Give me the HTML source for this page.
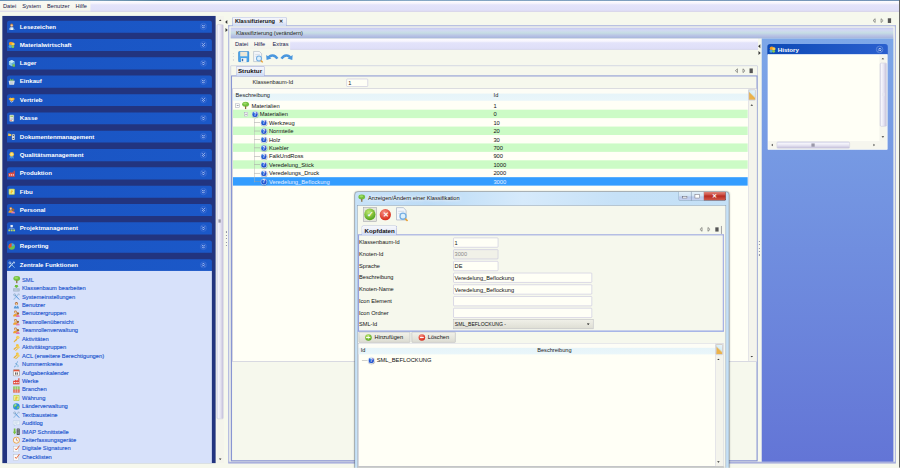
<!DOCTYPE html>
<html><head><meta charset="utf-8"><title>Klassifizierung</title>
<style>
html,body{margin:0;padding:0;width:900px;height:468px;overflow:hidden;background:#f6f8ed}
#s{position:absolute;left:0;top:0;width:1920px;height:998.4px;transform:scale(0.46875);transform-origin:0 0;background:#f6f8ed;overflow:hidden;font-family:"Liberation Sans",sans-serif;font-size:11.5px}
#s div,#s svg{position:absolute}
.t,.ta{white-space:nowrap;line-height:16px;height:16px}
.t{font-size:12px}
.ta{font-size:12.3px}
</style></head><body><div id="s">
<div style="left:0px;top:0px;width:1920px;height:24.75px;background:linear-gradient(#fafaf4,#f3f3ea)"></div>
<div style="left:192.64px;top:1.71px;width:1725.23px;height:23.04px;background:linear-gradient(#fefdff,#f6f4fd 22%,#e4e4fa 36%,#e0e0f9 88%,#d2cfea)"></div>
<div style="left:0px;top:0px;width:1920px;height:1.81px;background:linear-gradient(90deg,#5a88b0,#86a8c4 8%,#477796 18%,#7fa3c2 45%,#6a8cb2)"></div>
<div style="left:0px;top:23.47px;width:1920px;height:1.28px;background:#d9d6ea"></div>
<div class="t" style="left:6.4px;top:5.44px;color:#15154a">Datei</div>
<div class="t" style="left:47.57px;top:5.44px;color:#15154a">System</div>
<div class="t" style="left:100.27px;top:5.44px;color:#15154a">Benutzer</div>
<div class="t" style="left:161.28px;top:5.44px;color:#15154a">Hilfe</div>
<div style="left:1918.29px;top:0px;width:1.71px;height:998.4px;background:#5a5a5a"></div>
<div style="left:4.91px;top:34.13px;width:455.47px;height:953.6px;background:#22347f"></div>
<div style="left:14.93px;top:44.16px;width:436.69px;height:25.6px;background:linear-gradient(90deg,#1a54c2,#1b58c8);border-radius:4.5px 4.5px 0 0"></div>
<svg class="a" style="left:17.49px;top:48.75px" width="16.0" height="16.0" viewBox="0 0 16 16"><circle cx="8" cy="4.6" r="3.3" fill="#b8763a"/><circle cx="8" cy="5.4" r="2.3" fill="#f4cfa4"/><path d="M2.5 15 C2.5 10 5 9 8 9 C11 9 13.5 10 13.5 15 Z" fill="#e4eef9"/><path d="M2.5 15 C2.5 12.5 3.5 11 5 10.4 L5 15 Z M13.5 15 C13.5 12.5 12.5 11 11 10.4 L11 15 Z" fill="#5b9bd8"/></svg>
<div class="t" style="left:42.24px;top:48.96px;color:#fff;font-weight:bold;font-size:13px">Lesezeichen</div>
<div style="left:426.67px;top:49.28px;width:14.51px;height:14.51px;border-radius:50%;border:1px solid #4c7cda;box-sizing:border-box;background:#2159ca"></div>
<svg class="a" style="left:0;top:0" width="1920" height="999"><path d="M430.9 53.0 l3 3 l3 -3 M430.9 57.0 l3 3 l3 -3" stroke="#e4ecff" stroke-width="1.4" fill="none"/></svg>
<div style="left:14.93px;top:83.27px;width:436.69px;height:25.6px;background:linear-gradient(90deg,#1a54c2,#1b58c8);border-radius:4.5px 4.5px 0 0"></div>
<svg class="a" style="left:17.49px;top:87.86px" width="16.0" height="16.0" viewBox="0 0 16 16"><circle cx="6.5" cy="5.5" r="4.5" fill="#f59a23"/><circle cx="11" cy="6" r="3.4" fill="#f8cf4c"/><circle cx="5" cy="11" r="3.6" fill="#4aa6e0"/><circle cx="10.5" cy="11.5" r="3" fill="#86c84c"/></svg>
<div class="t" style="left:42.24px;top:88.07px;color:#fff;font-weight:bold;font-size:13px">Materialwirtschaft</div>
<div style="left:426.67px;top:88.39px;width:14.51px;height:14.51px;border-radius:50%;border:1px solid #4c7cda;box-sizing:border-box;background:#2159ca"></div>
<svg class="a" style="left:0;top:0" width="1920" height="999"><path d="M430.9 92.1 l3 3 l3 -3 M430.9 96.1 l3 3 l3 -3" stroke="#e4ecff" stroke-width="1.4" fill="none"/></svg>
<div style="left:14.93px;top:122.38px;width:436.69px;height:25.6px;background:linear-gradient(90deg,#1a54c2,#1b58c8);border-radius:4.5px 4.5px 0 0"></div>
<svg class="a" style="left:17.49px;top:126.97px" width="16.0" height="16.0" viewBox="0 0 16 16"><path d="M8 1 L14 4 L14 11 L8 14.5 L2 11 L2 4 Z" fill="#8fcdea"/><path d="M8 7.5 L14 4 L14 11 L8 14.5 Z" fill="#5fb0dc"/><path d="M8 1 L14 4 L8 7.5 L2 4 Z" fill="#c4e7f6"/><rect x="9.5" y="10" width="5.5" height="5.5" rx="1" fill="#7cc04a"/></svg>
<div class="t" style="left:42.24px;top:127.18px;color:#fff;font-weight:bold;font-size:13px">Lager</div>
<div style="left:426.67px;top:127.5px;width:14.51px;height:14.51px;border-radius:50%;border:1px solid #4c7cda;box-sizing:border-box;background:#2159ca"></div>
<svg class="a" style="left:0;top:0" width="1920" height="999"><path d="M430.9 131.3 l3 3 l3 -3 M430.9 135.3 l3 3 l3 -3" stroke="#e4ecff" stroke-width="1.4" fill="none"/></svg>
<div style="left:14.93px;top:161.49px;width:436.69px;height:25.6px;background:linear-gradient(90deg,#1a54c2,#1b58c8);border-radius:4.5px 4.5px 0 0"></div>
<svg class="a" style="left:17.49px;top:166.08px" width="16.0" height="16.0" viewBox="0 0 16 16"><path d="M5 1.5 L8 5 L11 1.5 L12 6 L4 6 Z" fill="#78c043"/><path d="M1.5 6.5 L14.5 6.5 L13 15 L3 15 Z" fill="#dfe7ec"/><path d="M4 8.5 L12 8.5 M4.4 11 L11.6 11 M4.8 13.2 L11.2 13.2" stroke="#9fb0bb" stroke-width="1"/></svg>
<div class="t" style="left:42.24px;top:166.29px;color:#fff;font-weight:bold;font-size:13px">Einkauf</div>
<div style="left:426.67px;top:166.61px;width:14.51px;height:14.51px;border-radius:50%;border:1px solid #4c7cda;box-sizing:border-box;background:#2159ca"></div>
<svg class="a" style="left:0;top:0" width="1920" height="999"><path d="M430.9 170.4 l3 3 l3 -3 M430.9 174.4 l3 3 l3 -3" stroke="#e4ecff" stroke-width="1.4" fill="none"/></svg>
<div style="left:14.93px;top:200.6px;width:436.69px;height:25.6px;background:linear-gradient(90deg,#1a54c2,#1b58c8);border-radius:4.5px 4.5px 0 0"></div>
<svg class="a" style="left:17.49px;top:205.19px" width="16.0" height="16.0" viewBox="0 0 16 16"><path d="M1 6 L5 3.2 L8 4.6 L11 3.2 L15 6 L8 11.5 Z" fill="#f6a623"/><path d="M3 6 L8 4.6 L13 6 L8 9 Z" fill="#fbd65a"/><path d="M4 10 L8 13 L12 10" stroke="#fff" stroke-width="1.4" fill="none"/></svg>
<div class="t" style="left:42.24px;top:205.40px;color:#fff;font-weight:bold;font-size:13px">Vertrieb</div>
<div style="left:426.67px;top:205.72px;width:14.51px;height:14.51px;border-radius:50%;border:1px solid #4c7cda;box-sizing:border-box;background:#2159ca"></div>
<svg class="a" style="left:0;top:0" width="1920" height="999"><path d="M430.9 209.5 l3 3 l3 -3 M430.9 213.5 l3 3 l3 -3" stroke="#e4ecff" stroke-width="1.4" fill="none"/></svg>
<div style="left:14.93px;top:239.71px;width:436.69px;height:25.6px;background:linear-gradient(90deg,#1a54c2,#1b58c8);border-radius:4.5px 4.5px 0 0"></div>
<svg class="a" style="left:17.49px;top:244.30px" width="16.0" height="16.0" viewBox="0 0 16 16"><rect x="3.5" y="1" width="9" height="14.2" rx="1.5" fill="#eef1f2" stroke="#8d979c" stroke-width="1"/><rect x="5" y="2.6" width="6" height="3.2" fill="#9ccc65"/><rect x="5" y="7.4" width="6" height="1.6" fill="#b0bac0"/><rect x="5" y="10" width="6" height="1.6" fill="#b0bac0"/><rect x="5" y="12.4" width="3" height="1.6" fill="#e5533d"/></svg>
<div class="t" style="left:42.24px;top:244.51px;color:#fff;font-weight:bold;font-size:13px">Kasse</div>
<div style="left:426.67px;top:244.83px;width:14.51px;height:14.51px;border-radius:50%;border:1px solid #4c7cda;box-sizing:border-box;background:#2159ca"></div>
<svg class="a" style="left:0;top:0" width="1920" height="999"><path d="M430.9 248.6 l3 3 l3 -3 M430.9 252.6 l3 3 l3 -3" stroke="#e4ecff" stroke-width="1.4" fill="none"/></svg>
<div style="left:14.93px;top:278.82px;width:436.69px;height:25.6px;background:linear-gradient(90deg,#1a54c2,#1b58c8);border-radius:4.5px 4.5px 0 0"></div>
<svg class="a" style="left:17.49px;top:283.41px" width="16.0" height="16.0" viewBox="0 0 16 16"><path d="M0.5 2 L3 2 L4 3 L7 3 L7 7 L0.5 7 Z" fill="#f7c948"/><rect x="8.5" y="3.5" width="6" height="12" rx="1" fill="#f4f6f7" stroke="#7b868c" stroke-width=".8"/><rect x="10" y="5.4" width="3" height="2.2" fill="#3d4a52"/><rect x="10" y="11" width="3" height="2.2" fill="#3d4a52"/></svg>
<div class="t" style="left:42.24px;top:283.62px;color:#fff;font-weight:bold;font-size:13px">Dokumentenmanagement</div>
<div style="left:426.67px;top:283.94px;width:14.51px;height:14.51px;border-radius:50%;border:1px solid #4c7cda;box-sizing:border-box;background:#2159ca"></div>
<svg class="a" style="left:0;top:0" width="1920" height="999"><path d="M430.9 287.7 l3 3 l3 -3 M430.9 291.7 l3 3 l3 -3" stroke="#e4ecff" stroke-width="1.4" fill="none"/></svg>
<div style="left:14.93px;top:317.93px;width:436.69px;height:25.6px;background:linear-gradient(90deg,#1a54c2,#1b58c8);border-radius:4.5px 4.5px 0 0"></div>
<svg class="a" style="left:17.49px;top:322.52px" width="16.0" height="16.0" viewBox="0 0 16 16"><path d="M4.5 9 L3 15.5 L6 14 L8 15.5 L10 14 L13 15.5 L11.5 9 Z" fill="#4a90d9"/><circle cx="8" cy="6" r="4.8" fill="#f8cb3c"/><circle cx="8" cy="6" r="2.6" fill="#fbe38a"/></svg>
<div class="t" style="left:42.24px;top:322.73px;color:#fff;font-weight:bold;font-size:13px">Qualitätsmanagement</div>
<div style="left:426.67px;top:323.05px;width:14.51px;height:14.51px;border-radius:50%;border:1px solid #4c7cda;box-sizing:border-box;background:#2159ca"></div>
<svg class="a" style="left:0;top:0" width="1920" height="999"><path d="M430.9 326.8 l3 3 l3 -3 M430.9 330.8 l3 3 l3 -3" stroke="#e4ecff" stroke-width="1.4" fill="none"/></svg>
<div style="left:14.93px;top:357.04px;width:436.69px;height:25.6px;background:linear-gradient(90deg,#1a54c2,#1b58c8);border-radius:4.5px 4.5px 0 0"></div>
<svg class="a" style="left:17.49px;top:361.63px" width="16.0" height="16.0" viewBox="0 0 16 16"><path d="M1 15 L1 7 L5 7 L5 5 L9 7 L9 5 L12 7 L12 2 L14.5 2 L14.5 15 Z" fill="#e2493a"/><rect x="2.5" y="10" width="2.4" height="2.4" fill="#fff"/><rect x="6.4" y="10" width="2.4" height="2.4" fill="#fff"/><rect x="10.3" y="10" width="2.4" height="2.4" fill="#fff"/></svg>
<div class="t" style="left:42.24px;top:361.84px;color:#fff;font-weight:bold;font-size:13px">Produktion</div>
<div style="left:426.67px;top:362.16px;width:14.51px;height:14.51px;border-radius:50%;border:1px solid #4c7cda;box-sizing:border-box;background:#2159ca"></div>
<svg class="a" style="left:0;top:0" width="1920" height="999"><path d="M430.9 365.9 l3 3 l3 -3 M430.9 369.9 l3 3 l3 -3" stroke="#e4ecff" stroke-width="1.4" fill="none"/></svg>
<div style="left:14.93px;top:396.15px;width:436.69px;height:25.6px;background:linear-gradient(90deg,#1a54c2,#1b58c8);border-radius:4.5px 4.5px 0 0"></div>
<svg class="a" style="left:17.49px;top:400.74px" width="16.0" height="16.0" viewBox="0 0 16 16"><rect x="1.5" y="1.5" width="13" height="13" rx="2" fill="#bcd25a"/><rect x="3" y="3" width="10" height="10" rx="1.5" fill="#e9ef9a"/><path d="M5 12 L6.5 5 L9.5 5 L11 8 L8.5 9 L9 12 Z" fill="#f3c130"/></svg>
<div class="t" style="left:42.24px;top:400.95px;color:#fff;font-weight:bold;font-size:13px">Fibu</div>
<div style="left:426.67px;top:401.27px;width:14.51px;height:14.51px;border-radius:50%;border:1px solid #4c7cda;box-sizing:border-box;background:#2159ca"></div>
<svg class="a" style="left:0;top:0" width="1920" height="999"><path d="M430.9 405.0 l3 3 l3 -3 M430.9 409.0 l3 3 l3 -3" stroke="#e4ecff" stroke-width="1.4" fill="none"/></svg>
<div style="left:14.93px;top:435.26px;width:436.69px;height:25.6px;background:linear-gradient(90deg,#1a54c2,#1b58c8);border-radius:4.5px 4.5px 0 0"></div>
<svg class="a" style="left:17.49px;top:439.85px" width="16.0" height="16.0" viewBox="0 0 16 16"><circle cx="6" cy="4.6" r="3" fill="#b8763a"/><circle cx="6" cy="5.2" r="2" fill="#f4cfa4"/><path d="M1 14 C1 9.5 3.5 8.6 6 8.6 C8.5 8.6 11 9.5 11 14 Z" fill="#f0a030"/><circle cx="11" cy="7.6" r="2.6" fill="#a8642a"/><path d="M7 15.5 C7 11.6 9 11 11 11 C13 11 15 11.6 15 15.5 Z" fill="#e07ab0"/></svg>
<div class="t" style="left:42.24px;top:440.06px;color:#fff;font-weight:bold;font-size:13px">Personal</div>
<div style="left:426.67px;top:440.38px;width:14.51px;height:14.51px;border-radius:50%;border:1px solid #4c7cda;box-sizing:border-box;background:#2159ca"></div>
<svg class="a" style="left:0;top:0" width="1920" height="999"><path d="M430.9 444.1 l3 3 l3 -3 M430.9 448.1 l3 3 l3 -3" stroke="#e4ecff" stroke-width="1.4" fill="none"/></svg>
<div style="left:14.93px;top:474.37px;width:436.69px;height:25.6px;background:linear-gradient(90deg,#1a54c2,#1b58c8);border-radius:4.5px 4.5px 0 0"></div>
<svg class="a" style="left:17.49px;top:478.96px" width="16.0" height="16.0" viewBox="0 0 16 16"><rect x="5.5" y="1" width="5" height="4.4" fill="#f4f6fb" stroke="#9fb2d8" stroke-width=".6"/><path d="M8 5.4 L8 8.4 M2.8 10.6 L2.8 8.4 L13.2 8.4 L13.2 10.6 M8 8.4 L8 10.6" stroke="#9fc0f0" stroke-width="1" fill="none"/><rect x="0.8" y="10.6" width="4" height="3.8" fill="#b8d868"/><rect x="6" y="10.6" width="4" height="3.8" fill="#b8d868"/><rect x="11.2" y="10.6" width="4" height="3.8" fill="#b8d868"/></svg>
<div class="t" style="left:42.24px;top:479.17px;color:#fff;font-weight:bold;font-size:13px">Projektmanagement</div>
<div style="left:426.67px;top:479.49px;width:14.51px;height:14.51px;border-radius:50%;border:1px solid #4c7cda;box-sizing:border-box;background:#2159ca"></div>
<svg class="a" style="left:0;top:0" width="1920" height="999"><path d="M430.9 483.2 l3 3 l3 -3 M430.9 487.2 l3 3 l3 -3" stroke="#e4ecff" stroke-width="1.4" fill="none"/></svg>
<div style="left:14.93px;top:513.48px;width:436.69px;height:25.6px;background:linear-gradient(90deg,#1a54c2,#1b58c8);border-radius:4.5px 4.5px 0 0"></div>
<svg class="a" style="left:17.49px;top:518.07px" width="16.0" height="16.0" viewBox="0 0 16 16"><circle cx="8" cy="8" r="6.8" fill="#6cc24a"/><path d="M8 8 L8 1.2 A6.8 6.8 0 0 0 2.2 11.6 Z" fill="#e8483a"/><path d="M8 8 L8 1.2 A6.8 6.8 0 0 1 14.4 5.6 Z" fill="#4aa6e0"/></svg>
<div class="t" style="left:42.24px;top:518.28px;color:#fff;font-weight:bold;font-size:13px">Reporting</div>
<div style="left:426.67px;top:518.6px;width:14.51px;height:14.51px;border-radius:50%;border:1px solid #4c7cda;box-sizing:border-box;background:#2159ca"></div>
<svg class="a" style="left:0;top:0" width="1920" height="999"><path d="M430.9 522.4 l3 3 l3 -3 M430.9 526.4 l3 3 l3 -3" stroke="#e4ecff" stroke-width="1.4" fill="none"/></svg>
<div style="left:14.93px;top:552.6px;width:436.69px;height:25.6px;background:linear-gradient(90deg,#1a54c2,#1b58c8);border-radius:4.5px 4.5px 0 0"></div>
<svg class="a" style="left:17.49px;top:557.18px" width="16.0" height="16.0" viewBox="0 0 16 16"><path d="M2.5 13.5 L11.5 3.5" stroke="#cfe4f6" stroke-width="2.2" stroke-linecap="round"/><path d="M13.5 13.5 L5 4.5" stroke="#8fc0ea" stroke-width="2" stroke-linecap="round"/><circle cx="4.2" cy="3.8" r="2.2" fill="none" stroke="#cfe4f6" stroke-width="1.4"/><path d="M11 2 L14 2 L14 5" stroke="#e8f2fb" stroke-width="1.4" fill="none"/></svg>
<div class="t" style="left:42.24px;top:557.40px;color:#fff;font-weight:bold;font-size:13px">Zentrale Funktionen</div>
<div style="left:426.67px;top:557.72px;width:14.51px;height:14.51px;border-radius:50%;border:1px solid #4c7cda;box-sizing:border-box;background:#2159ca"></div>
<svg class="a" style="left:0;top:0" width="1920" height="999"><path d="M430.9 564.5 l3 -3 l3 3 M430.9 568.5 l3 -3 l3 3" stroke="#e4ecff" stroke-width="1.4" fill="none"/></svg>
<div style="left:14.93px;top:577.92px;width:436.69px;height:409.81px;background:#d7e1fa"></div>
<svg class="a" style="left:26.67px;top:587.89px" width="17.6" height="17.6" viewBox="0 0 16 16"><ellipse cx="8" cy="5.6" rx="6.6" ry="4.8" fill="#72bf3f"/><ellipse cx="7" cy="4.4" rx="3.6" ry="2.2" fill="#9edb63"/><rect x="6.8" y="9.4" width="2.4" height="5.6" fill="#8d6a3a"/></svg>
<div class="t" style="left:46.93px;top:588.69px;color:#2457cf;font-size:12.3px;-webkit-text-stroke:0.3px #2457cf">SML</div>
<svg class="a" style="left:27.31px;top:606.69px" width="16.0" height="16.0" viewBox="0 0 16 16"><path d="M5 1 L11 1 L11 3.4 L13 3.4 L8 7.4 L3 3.4 L5 3.4 Z" fill="#6fbf3f"/><rect x="1" y="8" width="14" height="7" rx="1" fill="#9fb4c8"/><path d="M2.5 10 L13.5 10 M2.5 12.4 L13.5 12.4" stroke="#e8eff5" stroke-width="1.2" stroke-dasharray="1.6 1"/></svg>
<div class="t" style="left:46.93px;top:606.69px;color:#2457cf;font-size:12.3px;-webkit-text-stroke:0.3px #2457cf">Klassenbaum bearbeiten</div>
<svg class="a" style="left:27.31px;top:624.69px" width="16.0" height="16.0" viewBox="0 0 16 16"><path d="M2.5 13.5 L11.5 3.5" stroke="#9cc0e4" stroke-width="2.2" stroke-linecap="round"/><path d="M13.5 13.5 L5 4.5" stroke="#4a90d9" stroke-width="2" stroke-linecap="round"/><circle cx="4.2" cy="3.8" r="2.2" fill="none" stroke="#8aa8c4" stroke-width="1.4"/><path d="M11 2 L14 2 L14 5" stroke="#9ab0c6" stroke-width="1.4" fill="none"/></svg>
<div class="t" style="left:46.93px;top:624.69px;color:#2457cf;font-size:12.3px;-webkit-text-stroke:0.3px #2457cf">Systemeinstellungen</div>
<svg class="a" style="left:27.31px;top:642.69px" width="16.0" height="16.0" viewBox="0 0 16 16"><circle cx="8" cy="4.6" r="3.3" fill="#a8642a"/><circle cx="8" cy="5.6" r="2.2" fill="#f4cfa4"/><path d="M2.5 15 C2.5 10 5 9 8 9 C11 9 13.5 10 13.5 15 Z" fill="#5b9bd8"/><path d="M6.5 9 L8 12 L9.5 9 Z" fill="#f5f8fc"/></svg>
<div class="t" style="left:46.93px;top:642.69px;color:#2457cf;font-size:12.3px;-webkit-text-stroke:0.3px #2457cf">Benutzer</div>
<svg class="a" style="left:27.31px;top:660.69px" width="16.0" height="16.0" viewBox="0 0 16 16"><circle cx="6" cy="4.6" r="3" fill="#b8763a"/><circle cx="6" cy="5.2" r="2" fill="#f4cfa4"/><path d="M1 14 C1 9.5 3.5 8.6 6 8.6 C8.5 8.6 11 9.5 11 14 Z" fill="#f0a030"/><circle cx="11" cy="7.6" r="2.6" fill="#a8642a"/><path d="M7 15.5 C7 11.6 9 11 11 11 C13 11 15 11.6 15 15.5 Z" fill="#e07ab0"/></svg>
<div class="t" style="left:46.93px;top:660.69px;color:#2457cf;font-size:12.3px;-webkit-text-stroke:0.3px #2457cf">Benutzergruppen</div>
<svg class="a" style="left:27.31px;top:678.69px" width="16.0" height="16.0" viewBox="0 0 16 16"><circle cx="6" cy="4.6" r="3" fill="#b8763a"/><circle cx="6" cy="5.2" r="2" fill="#f4cfa4"/><path d="M1 14 C1 9.5 3.5 8.6 6 8.6 C8.5 8.6 11 9.5 11 14 Z" fill="#f0a030"/><circle cx="11" cy="7.6" r="2.6" fill="#a8642a"/><path d="M7 15.5 C7 11.6 9 11 11 11 C13 11 15 11.6 15 15.5 Z" fill="#e07ab0"/></svg>
<div class="t" style="left:46.93px;top:678.69px;color:#2457cf;font-size:12.3px;-webkit-text-stroke:0.3px #2457cf">Teamrollenübersicht</div>
<svg class="a" style="left:27.31px;top:696.69px" width="16.0" height="16.0" viewBox="0 0 16 16"><circle cx="6" cy="4.6" r="3" fill="#b8763a"/><circle cx="6" cy="5.2" r="2" fill="#f4cfa4"/><path d="M1 14 C1 9.5 3.5 8.6 6 8.6 C8.5 8.6 11 9.5 11 14 Z" fill="#f0a030"/><circle cx="11" cy="7.6" r="2.6" fill="#a8642a"/><path d="M7 15.5 C7 11.6 9 11 11 11 C13 11 15 11.6 15 15.5 Z" fill="#e07ab0"/></svg>
<div class="t" style="left:46.93px;top:696.69px;color:#2457cf;font-size:12.3px;-webkit-text-stroke:0.3px #2457cf">Teamrollenverwaltung</div>
<svg class="a" style="left:27.31px;top:714.69px" width="16.0" height="16.0" viewBox="0 0 16 16"><circle cx="11" cy="4.6" r="3.4" fill="#f2c644"/><circle cx="11.6" cy="4" r="1.1" fill="#fff6d0"/><path d="M8.8 6.8 L2.4 13.2 L2.4 15 L4.6 15 L4.6 13.6 L6 13.6 L6 12.2 L7.4 12.2 L10 9" fill="#e8b030"/></svg>
<div class="t" style="left:46.93px;top:714.69px;color:#2457cf;font-size:12.3px;-webkit-text-stroke:0.3px #2457cf">Aktivitäten</div>
<svg class="a" style="left:27.31px;top:732.69px" width="16.0" height="16.0" viewBox="0 0 16 16"><circle cx="10" cy="4" r="3" fill="#f2c644"/><path d="M8 6 L2 11 L2 13 L4 13 L9.6 7.6" fill="#e8b030"/><circle cx="12" cy="8" r="3" fill="#f5d060"/><path d="M10 10 L4.6 15 L7 15.4 L12 11" fill="#eebb40"/></svg>
<div class="t" style="left:46.93px;top:732.69px;color:#2457cf;font-size:12.3px;-webkit-text-stroke:0.3px #2457cf">Aktivitätsgruppen</div>
<svg class="a" style="left:27.31px;top:750.69px" width="16.0" height="16.0" viewBox="0 0 16 16"><circle cx="10" cy="4" r="3" fill="#f2c644"/><path d="M8 6 L2 11 L2 13 L4 13 L9.6 7.6" fill="#e8b030"/><circle cx="12" cy="8" r="3" fill="#f5d060"/><path d="M10 10 L4.6 15 L7 15.4 L12 11" fill="#eebb40"/></svg>
<div class="t" style="left:46.93px;top:750.69px;color:#2457cf;font-size:12.3px;-webkit-text-stroke:0.3px #2457cf">ACL (erweitere Berechtigungen)</div>
<svg class="a" style="left:27.31px;top:768.69px" width="16.0" height="16.0" viewBox="0 0 16 16"><path d="M9 1 L12 3 L8 6 L11 8 L5 12 L7 13.6 L3 15 L4 11.6 L8 9 L5 7 L9.6 3.6 Z" fill="#6aa4d6"/><circle cx="11" cy="11.6" r="2.6" fill="#a8cbe8"/></svg>
<div class="t" style="left:46.93px;top:768.69px;color:#2457cf;font-size:12.3px;-webkit-text-stroke:0.3px #2457cf">Nummernkreise</div>
<svg class="a" style="left:27.31px;top:786.69px" width="16.0" height="16.0" viewBox="0 0 16 16"><rect x="1.5" y="1.5" width="13" height="13.4" rx="1.4" fill="#fdfdfd" stroke="#6d5a50" stroke-width="1"/><rect x="2" y="2" width="12" height="3.2" fill="#e2563c"/><rect x="5.4" y="7.4" width="2" height="5" fill="#444"/><rect x="8.8" y="7.4" width="2" height="5" fill="#444"/></svg>
<div class="t" style="left:46.93px;top:786.69px;color:#2457cf;font-size:12.3px;-webkit-text-stroke:0.3px #2457cf">Aufgabenkalender</div>
<svg class="a" style="left:27.31px;top:804.69px" width="16.0" height="16.0" viewBox="0 0 16 16"><path d="M1 15 L1 7 L5 7 L5 5 L9 7 L9 5 L12 7 L12 2 L14.5 2 L14.5 15 Z" fill="#e2493a"/><rect x="2.5" y="10" width="2.4" height="2.4" fill="#fff"/><rect x="6.4" y="10" width="2.4" height="2.4" fill="#fff"/><rect x="10.3" y="10" width="2.4" height="2.4" fill="#fff"/></svg>
<div class="t" style="left:46.93px;top:804.69px;color:#2457cf;font-size:12.3px;-webkit-text-stroke:0.3px #2457cf">Werke</div>
<svg class="a" style="left:27.31px;top:822.69px" width="16.0" height="16.0" viewBox="0 0 16 16"><rect x="1" y="1.5" width="14" height="6.5" fill="#7cc04a"/><rect x="1" y="8" width="14" height="6.5" fill="#e2573c"/><path d="M5.6 1.5 L5.6 14.5 M10.4 1.5 L10.4 14.5 M1 4.8 L15 4.8 M1 11.2 L15 11.2" stroke="#f1f4e6" stroke-width=".9"/></svg>
<div class="t" style="left:46.93px;top:822.69px;color:#2457cf;font-size:12.3px;-webkit-text-stroke:0.3px #2457cf">Branchen</div>
<svg class="a" style="left:27.31px;top:840.69px" width="16.0" height="16.0" viewBox="0 0 16 16"><rect x="1.5" y="1.5" width="13" height="13" rx="2" fill="#bcd25a"/><rect x="3" y="3" width="10" height="10" rx="1.5" fill="#e9ef9a"/><path d="M5 12 L6.5 5 L9.5 5 L11 8 L8.5 9 L9 12 Z" fill="#f3c130"/></svg>
<div class="t" style="left:46.93px;top:840.69px;color:#2457cf;font-size:12.3px;-webkit-text-stroke:0.3px #2457cf">Währung</div>
<svg class="a" style="left:27.31px;top:858.69px" width="16.0" height="16.0" viewBox="0 0 16 16"><circle cx="8" cy="8" r="7" fill="#2f8fd8"/><path d="M4 3.6 C6 2 9 3 8.4 5.4 C8 7 5.4 7 5 9 C4.6 11 3 10 2.2 8.4 C1.8 6.4 2.6 4.6 4 3.6 Z" fill="#7ccf52"/><path d="M10.5 8 C12.6 7.6 14 9 13.2 11 C12.4 12.8 10.4 13.6 9.8 12 C9.4 10.6 9.4 8.4 10.5 8 Z" fill="#7ccf52"/><circle cx="6" cy="5" r="2.2" fill="#bfe8ff" opacity=".45"/></svg>
<div class="t" style="left:46.93px;top:858.69px;color:#2457cf;font-size:12.3px;-webkit-text-stroke:0.3px #2457cf">Länderverwaltung</div>
<svg class="a" style="left:27.31px;top:876.69px" width="16.0" height="16.0" viewBox="0 0 16 16"><path d="M2.5 13.5 L11.5 3.5" stroke="#9cc0e4" stroke-width="2.2" stroke-linecap="round"/><path d="M13.5 13.5 L5 4.5" stroke="#4a90d9" stroke-width="2" stroke-linecap="round"/><circle cx="4.2" cy="3.8" r="2.2" fill="none" stroke="#8aa8c4" stroke-width="1.4"/><path d="M11 2 L14 2 L14 5" stroke="#9ab0c6" stroke-width="1.4" fill="none"/></svg>
<div class="t" style="left:46.93px;top:876.69px;color:#2457cf;font-size:12.3px;-webkit-text-stroke:0.3px #2457cf">Textbausteine</div>
<svg class="a" style="left:27.31px;top:894.69px" width="16.0" height="16.0" viewBox="0 0 16 16"><path d="M2 2.5 L14 2.5 Q15 2.5 15 3.5 L15 10 Q15 11 14 11 L7 11 L4 14 L4 11 L2 11 Q1 11 1 10 L1 3.5 Q1 2.5 2 2.5 Z" fill="#eef5fb" stroke="#a9c3dc" stroke-width=".9"/><path d="M3.6 5.4 L12.4 5.4 M3.6 8 L10 8" stroke="#a9c3dc" stroke-width="1"/></svg>
<div class="t" style="left:46.93px;top:894.69px;color:#2457cf;font-size:12.3px;-webkit-text-stroke:0.3px #2457cf">Auditlog</div>
<svg class="a" style="left:27.31px;top:912.69px" width="16.0" height="16.0" viewBox="0 0 16 16"><path d="M2.4 1 L6 1 L6 8 L8 8 L4.2 14 L0.4 8 L2.4 8 Z" fill="#77c23f"/><rect x="8.6" y="1" width="6.6" height="14" rx="1" fill="#4a4f55"/><path d="M10 3.6 L14 3.6 M10 6.4 L14 6.4 M10 9.2 L14 9.2 M10 12 L14 12" stroke="#cfd6dc" stroke-width="1.1"/></svg>
<div class="t" style="left:46.93px;top:912.69px;color:#2457cf;font-size:12.3px;-webkit-text-stroke:0.3px #2457cf">IMAP Schnittstelle</div>
<svg class="a" style="left:27.31px;top:930.69px" width="16.0" height="16.0" viewBox="0 0 16 16"><circle cx="8" cy="8" r="6.6" fill="#fbf6ea" stroke="#e89a3a" stroke-width="1.8"/><path d="M8 4 L8 8 L11 9.6" stroke="#7a4a9a" stroke-width="1.3" fill="none"/></svg>
<div class="t" style="left:46.93px;top:930.69px;color:#2457cf;font-size:12.3px;-webkit-text-stroke:0.3px #2457cf">Zeiterfassungsgeräte</div>
<svg class="a" style="left:27.31px;top:948.69px" width="16.0" height="16.0" viewBox="0 0 16 16"><rect x="2" y="3" width="10.6" height="12" fill="#fafafa" stroke="#b8bcc2" stroke-width=".9"/><path d="M5 8 L7.6 11 L14.6 1.6" stroke="#e8693a" stroke-width="2" fill="none"/></svg>
<div class="t" style="left:46.93px;top:948.69px;color:#2457cf;font-size:12.3px;-webkit-text-stroke:0.3px #2457cf">Digitale Signaturen</div>
<svg class="a" style="left:27.31px;top:966.69px" width="16.0" height="16.0" viewBox="0 0 16 16"><rect x="2" y="3" width="10.6" height="12" fill="#fafafa" stroke="#b8bcc2" stroke-width=".9"/><path d="M5 8 L7.6 11 L14.6 1.6" stroke="#e8693a" stroke-width="2" fill="none"/></svg>
<div class="t" style="left:46.93px;top:966.69px;color:#2457cf;font-size:12.3px;-webkit-text-stroke:0.3px #2457cf">Checklisten</div>
<div style="left:462.08px;top:34.13px;width:15.79px;height:953.6px;background:#f4f4ec"></div>
<div style="left:462.29px;top:51.63px;width:14.72px;height:842.24px;background:linear-gradient(90deg,#d4d4ea,#f6f6fc 18%,#e6e4f2 55%,#c4c0da);border-radius:3px;border:1px solid #c4c4dc;box-sizing:border-box"></div>
<div style="left:466.35px;top:468.05px;width:5.12px;height:6.83px;background:repeating-linear-gradient(#9a98a8 0 1px,#e8e8f0 1px 2px)"></div>
<svg class="a" style="left:0;top:0" width="1920" height="999"><polygon points="467.0,44.8 472.5,44.8 469.8,41.8" fill="#333"/></svg>
<svg class="a" style="left:0;top:0" width="1920" height="999"><polygon points="467.0,978.3 472.5,978.3 469.8,981.4" fill="#333"/></svg>
<svg class="a" style="left:0;top:0" width="1920" height="999"><polygon points="484.9,42.7 484.9,51.2 480.2,46.9" fill="#333"/></svg>
<svg class="a" style="left:0;top:0" width="1920" height="999"><polygon points="481.1,59.7 481.1,68.3 485.8,64.0" fill="#333"/></svg>
<div style="left:482.13px;top:492.8px;width:2.13px;height:38.4px;background:repeating-linear-gradient(#8a8aa0 0 1px,transparent 1px 3px)"></div>
<div style="left:487.04px;top:54.19px;width:1424px;height:934.4px;border:2.2px solid #9ea8dc;border-bottom:4.4px solid #aab0dc;box-sizing:border-box;background:#f6f8ed"></div>
<div style="left:494.93px;top:35.63px;width:116.69px;height:20.69px;background:linear-gradient(#f6f7fb,#e9edf8 50%,#c9d8f5);border:1.5px solid #8f9ad6;border-bottom:none;box-sizing:border-box;border-radius:4px 4px 0 0"></div>
<div class="t" style="left:501.33px;top:37.44px;font-weight:bold;color:#111">Klassifizierung</div>
<div class="t" style="left:595.84px;top:37.44px;font-size:10px;color:#222;font-weight:bold">✕</div>
<svg class="a" style="left:0;top:0" width="1920" height="999"><polygon points="1867.0,39.9 1867.0,48.0 1862.5,43.9" fill="none" stroke="#333" stroke-width="1"/></svg>
<svg class="a" style="left:0;top:0" width="1920" height="999"><polygon points="1879.6,39.9 1879.6,48.0 1884.0,43.9" fill="none" stroke="#333" stroke-width="1"/></svg>
<div style="left:1894.4px;top:38.83px;width:6.83px;height:9.81px;background:#555;"></div>
<div style="left:491.95px;top:58.67px;width:1413.97px;height:23.68px;background:linear-gradient(#c4c8f1,#d2d8f3 22%,#c6dde4 48%,#b8c2e5 75%,#a4b4da)"></div>
<div class="t" style="left:503.47px;top:63.04px;color:#222">Klassifizierung (verändern)</div>
<div style="left:495.57px;top:84.91px;width:1121.49px;height:20.27px;background:linear-gradient(#fafaf4,#f3f3ea)"></div>
<div style="left:618.67px;top:82.77px;width:997.97px;height:22.83px;background:linear-gradient(#fdfbff,#f6f4fd 22%,#e3e3fa 36%,#dfdff8 88%,#ccccec)"></div>
<div class="t" style="left:501.33px;top:87.15px;color:#15154a">Datei</div>
<div class="t" style="left:541.87px;top:87.15px;color:#15154a">Hilfe</div>
<div class="t" style="left:581.55px;top:87.15px;color:#15154a">Extras</div>
<svg class="a" style="left:508.16px;top:108.96px" width="24.0" height="24.0" viewBox="0 0 16 16"><rect x="0.5" y="0.5" width="15" height="15" rx="1.6" fill="#49a4ea" stroke="#3a86cc" stroke-width="1"/><rect x="3" y="1" width="10" height="6.4" fill="#ece7d6"/><rect x="4" y="10" width="8" height="5.5" fill="#f4f4f4"/><rect x="5.2" y="11" width="2" height="3.4" fill="#3a6ea8"/></svg>
<svg class="a" style="left:536.75px;top:108.43px" width="25.9" height="25.9" viewBox="0 0 16 16"><path d="M2.5 1 L10 1 L13 4 L13 14.5 L2.5 14.5 Z" fill="#f4f7fb" stroke="#a9b4c4" stroke-width=".8"/><path d="M4.5 5 L11 5 M4.5 7.4 L9 7.4" stroke="#c8d2de" stroke-width=".8"/><circle cx="9.6" cy="10.4" r="3.3" fill="#dcf0fc" stroke="#74aee2" stroke-width="1.4"/><path d="M12 13 L14.6 15.6" stroke="#e8a23a" stroke-width="1.8"/></svg>
<svg class="a" style="left:567.47px;top:110.93px" width="59.73" height="21.33" viewBox="0 0 28 10"><path d="M2.6 6 C4.4 2.6 9 2.4 11.6 6.6" stroke="#4a97de" stroke-width="2.5" fill="none"/><polygon points="0.4,3 0.8,8 5.6,6.4" fill="#4a97de"/><path d="M24.7 6 C22.9 2.6 18.3 2.4 15.7 6.6" stroke="#4a97de" stroke-width="2.5" fill="none"/><polygon points="26.9,3 26.5,8 21.7,6.4" fill="#4a97de"/></svg>
<div style="left:496.85px;top:107.95px;width:1.07px;height:26.45px;background:repeating-linear-gradient(#b8b8c4 0 1px,transparent 1px 3px)"></div>
<div style="left:764.59px;top:440.75px;width:1.07px;height:35.84px;background:repeating-linear-gradient(#b8b8c4 0 1px,transparent 1px 3px)"></div>
<svg class="a" style="left:0;top:0" width="1920" height="999"><polygon points="1622.0,94.5 1622.0,103.0 1617.3,98.8" fill="#333"/></svg>
<svg class="a" style="left:0;top:0" width="1920" height="999"><polygon points="1618.1,108.8 1618.1,117.3 1622.8,113.1" fill="#333"/></svg>
<div style="left:1619.2px;top:512px;width:2.13px;height:38.4px;background:repeating-linear-gradient(#8a8aa0 0 1px,transparent 1px 3px)"></div>
<div style="left:492.37px;top:139.73px;width:1124.27px;height:844.59px;border:1px solid #b0b4d8;box-sizing:border-box"></div>
<div style="left:493.01px;top:160.85px;width:1123.2px;height:823.47px;border:2.4px solid #7f8dd0;box-sizing:border-box"></div>
<div style="left:503.04px;top:141.44px;width:61.87px;height:20.69px;background:linear-gradient(#f6f7fb,#e9edf8 50%,#c9d8f5);border:1.5px solid #8f9ad6;border-bottom:none;box-sizing:border-box;border-radius:4px 4px 0 0"></div>
<div class="t" style="left:507.73px;top:143.47px;font-weight:bold;color:#111;font-size:13.2px">Struktur</div>
<svg class="a" style="left:0;top:0" width="1920" height="999"><polygon points="1573.2,146.8 1573.2,154.9 1568.8,150.8" fill="none" stroke="#333" stroke-width="1"/></svg>
<svg class="a" style="left:0;top:0" width="1920" height="999"><polygon points="1585.0,146.8 1585.0,154.9 1589.4,150.8" fill="none" stroke="#333" stroke-width="1"/></svg>
<div style="left:1599.15px;top:145.92px;width:6.83px;height:9.81px;background:#555;"></div>
<div class="t" style="left:538.67px;top:167.79px;color:#222">Klassenbaum-Id</div>
<div style="left:738.77px;top:167.68px;width:46.29px;height:17.49px;background:#fffff6;border:1px solid #b9b5d8;box-sizing:border-box;border-radius:2px"></div>
<div class="t" style="left:742.83px;top:168.64px;color:#222">1</div>
<div style="left:495.57px;top:188.59px;width:1119.36px;height:583.04px;background:#fffff6;border:1.3px solid #aeaeca;box-sizing:border-box"></div>
<div style="left:496.64px;top:189.65px;width:1099.09px;height:24.96px;background:linear-gradient(#fdfdf6 0 35%,#e6f4f9 42%,#eaf6fa)"></div>
<div class="t" style="left:502.61px;top:195.09px;color:#222">Beschreibung</div>
<div class="t" style="left:1053.01px;top:195.09px;color:#222">Id</div>
<div style="left:502.4px;top:221.44px;width:8.53px;height:8.53px;border:1px solid #9aa0b0;box-sizing:border-box;background:#fff"></div>
<div style="left:504.75px;top:225.17px;width:3.84px;height:1.07px;background:#444"></div>
<svg class="a" style="left:514.99px;top:216.11px" width="17.9" height="17.9" viewBox="0 0 16 16"><ellipse cx="8" cy="5.6" rx="6.6" ry="4.8" fill="#72bf3f"/><ellipse cx="7" cy="4.4" rx="3.6" ry="2.2" fill="#9edb63"/><rect x="6.8" y="9.4" width="2.4" height="5.6" fill="#8d6a3a"/></svg>
<div class="ta" style="left:536.32px;top:217.71px;color:#111">Materialien</div>
<div class="ta" style="left:1052.59px;top:217.71px;color:#111">1</div>
<div style="left:496.64px;top:234.11px;width:1098.24px;height:18.03px;background:#ccfbc6"></div>
<div style="left:520.53px;top:239.44px;width:8.53px;height:8.53px;border:1px solid #9aa0b0;box-sizing:border-box;background:#fff"></div>
<div style="left:522.88px;top:243.17px;width:3.84px;height:1.07px;background:#444"></div>
<div style="left:536.75px;top:236.67px;width:14.08px;height:14.08px;border-radius:50%;background:radial-gradient(circle at 45% 40%,#2f66e0,#1b4cc4 75%);border:1.6px solid #eef2fc;box-sizing:border-box;box-shadow:0.5px 1px 1.5px rgba(40,40,60,.55)"></div>
<div class="t" style="left:536.75px;top:236.21px;width:14.08px;text-align:center;color:#fff;font-weight:bold;font-size:10px">?</div>
<div class="ta" style="left:554.24px;top:235.71px;color:#111">Materialien</div>
<div class="ta" style="left:1052.59px;top:235.71px;color:#111">0</div>
<div style="left:542.29px;top:261.17px;width:12.37px;height:1.07px;background:#9a9a9a"></div>
<div style="left:555.73px;top:254.67px;width:14.08px;height:14.08px;border-radius:50%;background:radial-gradient(circle at 45% 40%,#2f66e0,#1b4cc4 75%);border:1.6px solid #eef2fc;box-sizing:border-box;box-shadow:0.5px 1px 1.5px rgba(40,40,60,.55)"></div>
<div class="t" style="left:555.73px;top:254.21px;width:14.08px;text-align:center;color:#fff;font-weight:bold;font-size:10px">?</div>
<div class="ta" style="left:573.65px;top:253.71px;color:#111">Werkzeug</div>
<div class="ta" style="left:1052.59px;top:253.71px;color:#111">10</div>
<div style="left:496.64px;top:270.11px;width:1098.24px;height:18.03px;background:#ccfbc6"></div>
<div style="left:542.29px;top:279.17px;width:12.37px;height:1.07px;background:#9a9a9a"></div>
<div style="left:555.73px;top:272.67px;width:14.08px;height:14.08px;border-radius:50%;background:radial-gradient(circle at 45% 40%,#2f66e0,#1b4cc4 75%);border:1.6px solid #eef2fc;box-sizing:border-box;box-shadow:0.5px 1px 1.5px rgba(40,40,60,.55)"></div>
<div class="t" style="left:555.73px;top:272.21px;width:14.08px;text-align:center;color:#fff;font-weight:bold;font-size:10px">?</div>
<div class="ta" style="left:573.65px;top:271.71px;color:#111">Normteile</div>
<div class="ta" style="left:1052.59px;top:271.71px;color:#111">20</div>
<div style="left:542.29px;top:297.17px;width:12.37px;height:1.07px;background:#9a9a9a"></div>
<div style="left:555.73px;top:290.67px;width:14.08px;height:14.08px;border-radius:50%;background:radial-gradient(circle at 45% 40%,#2f66e0,#1b4cc4 75%);border:1.6px solid #eef2fc;box-sizing:border-box;box-shadow:0.5px 1px 1.5px rgba(40,40,60,.55)"></div>
<div class="t" style="left:555.73px;top:290.21px;width:14.08px;text-align:center;color:#fff;font-weight:bold;font-size:10px">?</div>
<div class="ta" style="left:573.65px;top:289.71px;color:#111">Holz</div>
<div class="ta" style="left:1052.59px;top:289.71px;color:#111">30</div>
<div style="left:496.64px;top:306.11px;width:1098.24px;height:18.03px;background:#ccfbc6"></div>
<div style="left:542.29px;top:315.17px;width:12.37px;height:1.07px;background:#9a9a9a"></div>
<div style="left:555.73px;top:308.67px;width:14.08px;height:14.08px;border-radius:50%;background:radial-gradient(circle at 45% 40%,#2f66e0,#1b4cc4 75%);border:1.6px solid #eef2fc;box-sizing:border-box;box-shadow:0.5px 1px 1.5px rgba(40,40,60,.55)"></div>
<div class="t" style="left:555.73px;top:308.21px;width:14.08px;text-align:center;color:#fff;font-weight:bold;font-size:10px">?</div>
<div class="ta" style="left:573.65px;top:307.71px;color:#111">Kuebler</div>
<div class="ta" style="left:1052.59px;top:307.71px;color:#111">700</div>
<div style="left:542.29px;top:333.17px;width:12.37px;height:1.07px;background:#9a9a9a"></div>
<div style="left:555.73px;top:326.67px;width:14.08px;height:14.08px;border-radius:50%;background:radial-gradient(circle at 45% 40%,#2f66e0,#1b4cc4 75%);border:1.6px solid #eef2fc;box-sizing:border-box;box-shadow:0.5px 1px 1.5px rgba(40,40,60,.55)"></div>
<div class="t" style="left:555.73px;top:326.21px;width:14.08px;text-align:center;color:#fff;font-weight:bold;font-size:10px">?</div>
<div class="ta" style="left:573.65px;top:325.71px;color:#111">FalkUndRoss</div>
<div class="ta" style="left:1052.59px;top:325.71px;color:#111">900</div>
<div style="left:496.64px;top:342.11px;width:1098.24px;height:18.03px;background:#ccfbc6"></div>
<div style="left:542.29px;top:351.17px;width:12.37px;height:1.07px;background:#9a9a9a"></div>
<div style="left:555.73px;top:344.67px;width:14.08px;height:14.08px;border-radius:50%;background:radial-gradient(circle at 45% 40%,#2f66e0,#1b4cc4 75%);border:1.6px solid #eef2fc;box-sizing:border-box;box-shadow:0.5px 1px 1.5px rgba(40,40,60,.55)"></div>
<div class="t" style="left:555.73px;top:344.21px;width:14.08px;text-align:center;color:#fff;font-weight:bold;font-size:10px">?</div>
<div class="ta" style="left:573.65px;top:343.71px;color:#111">Veredelung_Stick</div>
<div class="ta" style="left:1052.59px;top:343.71px;color:#111">1000</div>
<div style="left:542.29px;top:369.17px;width:12.37px;height:1.07px;background:#9a9a9a"></div>
<div style="left:555.73px;top:362.67px;width:14.08px;height:14.08px;border-radius:50%;background:radial-gradient(circle at 45% 40%,#2f66e0,#1b4cc4 75%);border:1.6px solid #eef2fc;box-sizing:border-box;box-shadow:0.5px 1px 1.5px rgba(40,40,60,.55)"></div>
<div class="t" style="left:555.73px;top:362.21px;width:14.08px;text-align:center;color:#fff;font-weight:bold;font-size:10px">?</div>
<div class="ta" style="left:573.65px;top:361.71px;color:#111">Veredelungs_Druck</div>
<div class="ta" style="left:1052.59px;top:361.71px;color:#111">2000</div>
<div style="left:496.64px;top:377.89px;width:1098.24px;height:18.35px;background:#339dff"></div>
<div style="left:542.29px;top:387.17px;width:12.37px;height:1.07px;background:#9a9a9a"></div>
<div style="left:555.73px;top:380.67px;width:14.08px;height:14.08px;border-radius:50%;background:radial-gradient(circle at 45% 40%,#2f66e0,#1b4cc4 75%);border:1.6px solid #eef2fc;box-sizing:border-box;box-shadow:0.5px 1px 1.5px rgba(40,40,60,.55)"></div>
<div class="t" style="left:555.73px;top:380.21px;width:14.08px;text-align:center;color:#fff;font-weight:bold;font-size:10px">?</div>
<div class="ta" style="left:573.65px;top:379.71px;color:#e8f0ff">Veredelung_Beflockung</div>
<div class="ta" style="left:1052.59px;top:379.71px;color:#e8f0ff">3000</div>
<div style="left:542.29px;top:252.59px;width:1.07px;height:136.11px;background:#b4b4b4"></div>
<div style="left:1596.16px;top:189.65px;width:17.92px;height:580.48px;background:#f4f4ec;border-left:1px solid #d0d0e0;box-sizing:border-box"></div>
<div style="left:1597.01px;top:190.51px;width:14.93px;height:23.25px;background:linear-gradient(45deg,#efb54c 0,#eab048 46%,#d4ecf6 54%,#eef7fb);border:1px solid #b0b0c0;box-sizing:border-box;border-radius:2px"></div>
<svg class="a" style="left:0;top:0" width="1920" height="999"><polygon points="1601.1,225.5 1606.6,225.5 1603.8,222.5" fill="#333"/></svg>
<svg class="a" style="left:0;top:0" width="1920" height="999"><polygon points="1601.1,759.2 1606.6,759.2 1603.8,762.3" fill="#333"/></svg>
<div style="left:1624.96px;top:82.35px;width:280.96px;height:902.4px;background:linear-gradient(#7da7e8,#6375d6)"></div>
<div style="left:1637.33px;top:93.87px;width:256.21px;height:23.47px;background:linear-gradient(90deg,#0d49b6,#1c55c2 50%,#2a5fce);border-radius:6px 6px 0 0"></div>
<div style="left:1638.4px;top:116.48px;width:254.72px;height:202.67px;background:#fffff6;border:1.5px solid #fff;box-sizing:border-box"></div>
<svg class="a" style="left:1640.11px;top:98.03px" width="16.0" height="16.0" viewBox="0 0 16 16"><circle cx="6.5" cy="5.5" r="4.5" fill="#f59a23"/><circle cx="11" cy="6" r="3.4" fill="#f8cf4c"/><circle cx="5" cy="11" r="3.6" fill="#4aa6e0"/><circle cx="10.5" cy="11.5" r="3" fill="#86c84c"/></svg>
<div class="t" style="left:1659.31px;top:97.81px;color:#fff;font-weight:bold;font-size:13px">History</div>
<div style="left:1869.44px;top:98.13px;width:14.93px;height:14.93px;border-radius:50%;border:1px solid #8fb0ea;box-sizing:border-box;background:#2a5fcc"></div>
<svg class="a" style="left:0;top:0" width="1920" height="999"><path d="M1873.9 105.5 l3 -3 l3 3 M1873.9 109.3 l3 -3 l3 3" stroke="#fff" stroke-width="1.5" fill="none"/></svg>
<div style="left:1876.48px;top:118.19px;width:15.57px;height:182.61px;background:#f6f6ee"></div>
<div style="left:1877.33px;top:134.4px;width:14.51px;height:135.25px;background:linear-gradient(90deg,#d4d4ea,#f6f6fc 18%,#e6e4f2 55%,#c4c0da);border-radius:3px;border:1px solid #c4c4dc;box-sizing:border-box"></div>
<div style="left:1882.03px;top:198.4px;width:5.12px;height:6.83px;background:repeating-linear-gradient(#9a98a8 0 1px,#e8e8f0 1px 2px)"></div>
<svg class="a" style="left:0;top:0" width="1920" height="999"><polygon points="1880.7,126.5 1886.3,126.5 1883.5,123.5" fill="#333"/></svg>
<svg class="a" style="left:0;top:0" width="1920" height="999"><polygon points="1880.7,290.7 1886.3,290.7 1883.5,293.8" fill="#333"/></svg>
<div style="left:1639.25px;top:300.8px;width:252.8px;height:17.07px;background:#f6f6ee"></div>
<div style="left:1656.96px;top:301.65px;width:155.95px;height:15.79px;background:linear-gradient(#d4d4ea,#f6f6fc 18%,#e6e4f2 55%,#c4c0da);border-radius:3px;border:1px solid #c4c4dc;box-sizing:border-box"></div>
<div style="left:1731.41px;top:306.35px;width:6.83px;height:6.4px;background:repeating-linear-gradient(90deg,#9a98a8 0 1px,#e8e8f0 1px 2px)"></div>
<svg class="a" style="left:0;top:0" width="1920" height="999"><polygon points="1648.5,306.6 1648.5,312.1 1645.4,309.3" fill="#333"/></svg>
<svg class="a" style="left:0;top:0" width="1920" height="999"><polygon points="1863.4,306.6 1863.4,312.1 1866.5,309.3" fill="#333"/></svg>
<div style="left:755.63px;top:408.11px;width:800px;height:594.56px;background:linear-gradient(90deg,#c8e2f8,#bcdcf6 20%,#d6eafb 45%,#c6e1f7 70%,#c4e0f6);border:1.3px solid #566474;box-sizing:border-box;border-radius:8px 8px 0 0;box-shadow:0 0 3px rgba(0,0,0,.22)"></div>
<div style="left:762.45px;top:437.97px;width:786.13px;height:564.69px;background:#f6f8ed;border:1px solid #7f95b0;box-sizing:border-box"></div>
<svg class="a" style="left:762.88px;top:414.03px" width="17.6" height="17.6" viewBox="0 0 16 16"><ellipse cx="8" cy="5.6" rx="6.6" ry="4.8" fill="#72bf3f"/><ellipse cx="7" cy="4.4" rx="3.6" ry="2.2" fill="#9edb63"/><rect x="6.8" y="9.4" width="2.4" height="5.6" fill="#8d6a3a"/></svg>
<div class="t" style="left:785.07px;top:414.83px;color:#111;text-shadow:0 0 6px #fff,0 0 10px #fff,0 0 14px #fff">Anzeigen/Ändern einer Klassifikation</div>
<div style="left:1447.04px;top:408.75px;width:101.76px;height:19.2px;border:1px solid #6a7f9a;border-top:none;box-sizing:border-box;border-radius:0 0 4px 4px;background:linear-gradient(#e2eff9,#d2e4f3 50%,#b8c8ea 56%,#c6d2f0)"></div>
<div style="left:1501.23px;top:408.75px;width:47.57px;height:19.2px;border:1px solid #6a3030;border-top:none;box-sizing:border-box;border-radius:0 0 4px 0;background:linear-gradient(#e0887c,#c8443a 45%,#b82a20 50%,#d0584a)"></div>
<div style="left:1473.71px;top:408.75px;width:1.07px;height:18.77px;background:#6a7f9a"></div>
<div style="left:1455.79px;top:419.41px;width:9.81px;height:3.41px;background:#fff;border:1px solid #556;box-sizing:border-box"></div>
<div style="left:1482.24px;top:414.29px;width:10.67px;height:8.96px;background:#fff;border:1px solid #556;box-sizing:border-box"></div>
<div class="t" style="left:1518.08px;top:410.13px;color:#fff;font-weight:bold;font-size:12px">✕</div>
<div style="left:774.83px;top:442.03px;width:29.44px;height:30.72px;border:1px solid #9a9aa8;box-sizing:border-box;background:#e4e6dc"></div>
<div style="left:777.39px;top:445.01px;width:23.89px;height:25.17px;border-radius:50%;background:radial-gradient(circle at 40% 30%,#c0e870,#5aa820 70%)"></div>
<div class="t" style="left:782.08px;top:449.81px;color:#fff;font-weight:bold;font-size:16px">✓</div>
<div style="left:810.24px;top:445.87px;width:23.89px;height:24.32px;border-radius:50%;background:radial-gradient(circle at 40% 30%,#f89080,#d83020 70%)"></div>
<div class="t" style="left:816.21px;top:449.81px;color:#fff;font-weight:bold;font-size:14px">✕</div>
<svg class="a" style="left:840.96px;top:441.36px" width="31.2" height="31.2" viewBox="0 0 16 16"><path d="M2.5 1 L10 1 L13 4 L13 14.5 L2.5 14.5 Z" fill="#f4f7fb" stroke="#a9b4c4" stroke-width=".8"/><path d="M4.5 5 L11 5 M4.5 7.4 L9 7.4" stroke="#c8d2de" stroke-width=".8"/><circle cx="9.6" cy="10.4" r="3.3" fill="#dcf0fc" stroke="#74aee2" stroke-width="1.4"/><path d="M12 13 L14.6 15.6" stroke="#e8a23a" stroke-width="1.8"/></svg>
<div style="left:763.31px;top:500.05px;width:780.8px;height:207.79px;border:2.2px solid #8e9be0;border-left:3.5px solid #95a2e0;border-bottom:3.6px solid #9dabe6;box-sizing:border-box;background:#f6f8ed"></div>
<div style="left:770.77px;top:481.07px;width:76.16px;height:20.69px;background:linear-gradient(#f6f7fb,#e9edf8 50%,#c9d8f5);border:1.5px solid #8f9ad6;border-bottom:none;box-sizing:border-box;border-radius:4px 4px 0 0"></div>
<div class="t" style="left:777.81px;top:483.52px;font-weight:bold;color:#111;font-size:13px">Kopfdaten</div>
<svg class="a" style="left:0;top:0" width="1920" height="999"><polygon points="1497.7,485.3 1497.7,493.4 1493.2,489.4" fill="none" stroke="#333" stroke-width="1"/></svg>
<svg class="a" style="left:0;top:0" width="1920" height="999"><polygon points="1510.3,485.3 1510.3,493.4 1514.8,489.4" fill="none" stroke="#333" stroke-width="1"/></svg>
<div style="left:1526.19px;top:484.69px;width:6.83px;height:9.81px;background:#555;"></div>
<div style="left:1538.13px;top:482.13px;width:2.13px;height:17.07px;background:#9a9aa0"></div>
<div class="t" style="left:765.87px;top:508.69px;color:#111">Klassenbaum-Id</div>
<div style="left:967.04px;top:507.31px;width:96.21px;height:20.48px;background:#fffff6;border:1px solid #b9b5d8;box-sizing:border-box;border-radius:2px"></div>
<div class="t" style="left:969.81px;top:509.97px;color:#111">1</div>
<div class="t" style="left:765.87px;top:533.70px;color:#111">Knoten-Id</div>
<div style="left:967.04px;top:532.31px;width:96.21px;height:20.48px;background:#f1f1e8;border:1px solid #b9b5d8;box-sizing:border-box;border-radius:2px"></div>
<div class="t" style="left:969.81px;top:534.98px;color:#888">3000</div>
<div class="t" style="left:765.87px;top:558.70px;color:#111">Sprache</div>
<div style="left:967.04px;top:557.31px;width:96.21px;height:20.48px;background:#fffff6;border:1px solid #b9b5d8;box-sizing:border-box;border-radius:2px"></div>
<div class="t" style="left:969.81px;top:559.98px;color:#111">DE</div>
<div class="t" style="left:765.87px;top:583.70px;color:#111">Beschreibung</div>
<div style="left:967.04px;top:582.31px;width:296.32px;height:20.48px;background:#fffff6;border:1px solid #b9b5d8;box-sizing:border-box;border-radius:2px"></div>
<div class="t" style="left:969.81px;top:584.98px;color:#111">Veredelung_Beflockung</div>
<div class="t" style="left:765.87px;top:608.70px;color:#111">Knoten-Name</div>
<div style="left:967.04px;top:607.32px;width:296.32px;height:20.48px;background:#fffff6;border:1px solid #b9b5d8;box-sizing:border-box;border-radius:2px"></div>
<div class="t" style="left:969.81px;top:609.98px;color:#111">Veredelung_Beflockung</div>
<div class="t" style="left:765.87px;top:633.71px;color:#111">Icon Element</div>
<div style="left:967.04px;top:632.32px;width:296.32px;height:20.48px;background:#fffff6;border:1px solid #b9b5d8;box-sizing:border-box;border-radius:2px"></div>
<div class="t" style="left:969.81px;top:634.99px;color:#111"></div>
<div class="t" style="left:765.87px;top:658.71px;color:#111">Icon Ordner</div>
<div style="left:967.04px;top:657.32px;width:296.32px;height:20.48px;background:#fffff6;border:1px solid #b9b5d8;box-sizing:border-box;border-radius:2px"></div>
<div class="t" style="left:969.81px;top:659.99px;color:#111"></div>
<div class="t" style="left:765.87px;top:683.71px;color:#111">SML-Id</div>
<div style="left:967.04px;top:680.62px;width:298.88px;height:21.76px;background:linear-gradient(#f0f0e8,#deded4);border:1px solid #b0b0b8;box-sizing:border-box"></div>
<div class="t" style="left:970.24px;top:683.71px;color:#111;font-size:10.8px">SML_BEFLOCKUNG -</div>
<svg class="a" style="left:0;top:0" width="1920" height="999"><polygon points="1251.8,690.1 1257.8,690.1 1254.8,693.4" fill="#111"/></svg>
<div style="left:765.23px;top:708.27px;width:109.44px;height:22.83px;background:linear-gradient(#f2f2ea,#dcdcd2);border:1px solid #a8a8b0;box-sizing:border-box;border-radius:2px"></div>
<div style="left:878.29px;top:708.27px;width:93.23px;height:22.83px;background:linear-gradient(#f2f2ea,#dcdcd2);border:1px solid #a8a8b0;box-sizing:border-box;border-radius:2px"></div>
<div style="left:778.67px;top:712.96px;width:14.08px;height:14.08px;border-radius:50%;background:radial-gradient(circle at 40% 30%,#c0e870,#5aa820 70%)"></div>
<div style="left:893.01px;top:712.96px;width:14.08px;height:14.08px;border-radius:50%;background:radial-gradient(circle at 40% 30%,#f89080,#d83020 70%)"></div>
<div style="left:781.44px;top:719.36px;width:8.53px;height:1.28px;background:#fff"></div>
<div style="left:785.07px;top:715.73px;width:1.28px;height:8.53px;background:#fff"></div>
<div style="left:895.79px;top:719.36px;width:8.53px;height:1.28px;background:#fff"></div>
<div class="t" style="left:799.15px;top:711.79px;color:#111">Hinzufügen</div>
<div class="t" style="left:912.64px;top:711.79px;color:#111">Löschen</div>
<div style="left:763.73px;top:732.16px;width:779.52px;height:263.68px;background:#fffff6;border:1.3px solid #aeaeca;box-sizing:border-box"></div>
<div style="left:764.59px;top:733.23px;width:761.6px;height:23.25px;background:linear-gradient(#fdfdf6 0 35%,#e6f4f9 42%,#eaf6fa)"></div>
<div class="t" style="left:769.71px;top:737.81px;color:#222">Id</div>
<div class="t" style="left:1146.03px;top:737.81px;color:#222">Beschreibung</div>
<div style="left:772.27px;top:768.21px;width:11.95px;height:1.07px;background:#9a9a9a"></div>
<div style="left:785.07px;top:761.6px;width:14.08px;height:14.08px;border-radius:50%;background:radial-gradient(circle at 45% 40%,#2f66e0,#1b4cc4 75%);border:1.6px solid #eef2fc;box-sizing:border-box;box-shadow:0.5px 1px 1.5px rgba(40,40,60,.55)"></div>
<div class="t" style="left:785.07px;top:761.14px;width:14.08px;text-align:center;color:#fff;font-weight:bold;font-size:10px">?</div>
<div class="ta" style="left:803.63px;top:760.64px;color:#111">SML_BEFLOCKUNG</div>
<div style="left:1526.19px;top:733.23px;width:16.21px;height:261.76px;background:#f4f4ec;border-left:1px solid #d0d0e0;box-sizing:border-box"></div>
<div style="left:1526.61px;top:733.87px;width:14.93px;height:23.04px;background:linear-gradient(45deg,#efb54c 0,#eab048 46%,#d4ecf6 54%,#eef7fb);border:1px solid #b0b0c0;box-sizing:border-box;border-radius:2px"></div>
<svg class="a" style="left:0;top:0" width="1920" height="999"><polygon points="1529.8,768.2 1535.4,768.2 1532.6,765.2" fill="#333"/></svg>
<svg class="a" style="left:0;top:0" width="1920" height="999"><polygon points="1529.8,984.1 1535.4,984.1 1532.6,987.1" fill="#333"/></svg>
<div style="left:762.88px;top:994.99px;width:781.65px;height:3.41px;background:#b8b8b8"></div>
</div></body></html>
